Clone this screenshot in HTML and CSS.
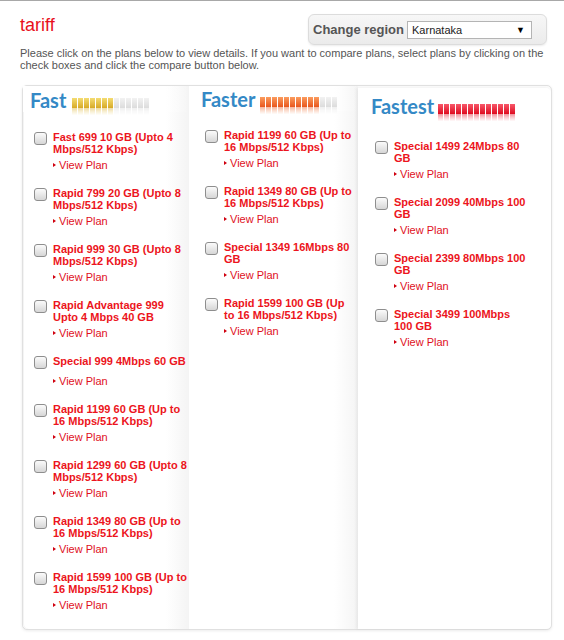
FILE: index.html
```html
<!DOCTYPE html>
<html>
<head>
<meta charset="utf-8">
<title>tariff</title>
<link rel="stylesheet" href="styles.css">
</head>
<body>
<div class="top">
  <h1 class="title">tariff</h1>
  <div class="region">
    <span class="region-label">Change region</span>
    <div class="select"><span class="select-value">Karnataka</span><span class="select-arrow">&#9660;</span></div>
  </div>
</div>
<p class="intro">Please click on the plans below to view details. If you want to compare plans, select plans by clicking on the check boxes and click the compare button below.</p>

<div class="plans">
  <div class="col col-fast">
    <div class="col-head">
      <span class="col-name">Fast</span>
      <span class="meter meter-fast"><i class="seg on"></i><i class="seg on"></i><i class="seg on"></i><i class="seg on"></i><i class="seg on"></i><i class="seg on"></i><i class="seg on"></i><i class="seg"></i><i class="seg"></i><i class="seg"></i><i class="seg"></i><i class="seg"></i><i class="seg"></i></span>
    </div>
    <ul class="list">
      <li class="plan"><input type="checkbox" class="check"><span class="plan-name">Fast 699 10 GB (Upto 4 Mbps/512 Kbps)</span><a class="view">View Plan</a></li>
      <li class="plan"><input type="checkbox" class="check"><span class="plan-name">Rapid 799 20 GB (Upto 8 Mbps/512 Kbps)</span><a class="view">View Plan</a></li>
      <li class="plan"><input type="checkbox" class="check"><span class="plan-name">Rapid 999 30 GB (Upto 8 Mbps/512 Kbps)</span><a class="view">View Plan</a></li>
      <li class="plan"><input type="checkbox" class="check"><span class="plan-name">Rapid Advantage 999 Upto 4 Mbps 40 GB</span><a class="view">View Plan</a></li>
      <li class="plan"><input type="checkbox" class="check"><span class="plan-name">Special 999 4Mbps 60 GB</span><a class="view">View Plan</a></li>
      <li class="plan"><input type="checkbox" class="check"><span class="plan-name">Rapid 1199 60 GB (Up to 16 Mbps/512 Kbps)</span><a class="view">View Plan</a></li>
      <li class="plan"><input type="checkbox" class="check"><span class="plan-name">Rapid 1299 60 GB (Upto 8 Mbps/512 Kbps)</span><a class="view">View Plan</a></li>
      <li class="plan"><input type="checkbox" class="check"><span class="plan-name">Rapid 1349 80 GB (Up to 16 Mbps/512 Kbps)</span><a class="view">View Plan</a></li>
      <li class="plan"><input type="checkbox" class="check"><span class="plan-name">Rapid 1599 100 GB (Up to 16 Mbps/512 Kbps)</span><a class="view">View Plan</a></li>
    </ul>
  </div>

  <div class="col col-faster">
    <div class="col-head">
      <span class="col-name">Faster</span>
      <span class="meter meter-faster"><i class="seg on"></i><i class="seg on"></i><i class="seg on"></i><i class="seg on"></i><i class="seg on"></i><i class="seg on"></i><i class="seg on"></i><i class="seg on"></i><i class="seg on"></i><i class="seg on"></i><i class="seg"></i><i class="seg"></i><i class="seg"></i></span>
    </div>
    <ul class="list">
      <li class="plan"><input type="checkbox" class="check"><span class="plan-name">Rapid 1199 60 GB (Up to 16 Mbps/512 Kbps)</span><a class="view">View Plan</a></li>
      <li class="plan"><input type="checkbox" class="check"><span class="plan-name">Rapid 1349 80 GB (Up to 16 Mbps/512 Kbps)</span><a class="view">View Plan</a></li>
      <li class="plan"><input type="checkbox" class="check"><span class="plan-name">Special 1349 16Mbps 80 GB</span><a class="view">View Plan</a></li>
      <li class="plan"><input type="checkbox" class="check"><span class="plan-name">Rapid 1599 100 GB (Up to 16 Mbps/512 Kbps)</span><a class="view">View Plan</a></li>
    </ul>
  </div>

  <div class="col col-fastest">
    <div class="col-head">
      <span class="col-name">Fastest</span>
      <span class="meter meter-fastest"><i class="seg on"></i><i class="seg on"></i><i class="seg on"></i><i class="seg on"></i><i class="seg on"></i><i class="seg on"></i><i class="seg on"></i><i class="seg on"></i><i class="seg on"></i><i class="seg on"></i><i class="seg on"></i><i class="seg on"></i><i class="seg on"></i></span>
    </div>
    <ul class="list">
      <li class="plan"><input type="checkbox" class="check"><span class="plan-name">Special 1499 24Mbps 80 GB</span><a class="view">View Plan</a></li>
      <li class="plan"><input type="checkbox" class="check"><span class="plan-name">Special 2099 40Mbps 100 GB</span><a class="view">View Plan</a></li>
      <li class="plan"><input type="checkbox" class="check"><span class="plan-name">Special 2399 80Mbps 100 GB</span><a class="view">View Plan</a></li>
      <li class="plan"><input type="checkbox" class="check"><span class="plan-name">Special 3499 100Mbps 100 GB</span><a class="view">View Plan</a></li>
    </ul>
  </div>
</div>
</body>
</html>
```

FILE: styles.css
```css
html, body {
  margin: 0;
  padding: 0;
  background: #fff;
}
body {
  border-top: 1px solid #a8a8a8;
  font-family: "Liberation Sans", Arial, sans-serif;
  color: #555;
}

.top {
  display: flex;
  justify-content: space-between;
  align-items: flex-start;
  margin-top: 13px;
  padding: 0 17px 0 20px;
}
.title {
  margin: 1px 0 0;
  font-size: 18px;
  line-height: 20px;
  font-weight: normal;
  color: #e8101c;
}
.region {
  box-sizing: border-box;
  width: 239px;
  height: 31px;
  display: flex;
  align-items: center;
  gap: 3px;
  padding: 0 14px 0 4px;
  border: 1px solid #dcdcdc;
  border-radius: 6px;
  background: linear-gradient(#f7f7f7, #ebebeb);
  box-shadow: 0 1px 2px rgba(0,0,0,0.08);
}
.region-label {
  font-size: 13px;
  font-weight: bold;
  color: #555;
  white-space: nowrap;
}
.select {
  box-sizing: border-box;
  width: 125px;
  height: 18px;
  display: flex;
  align-items: center;
  justify-content: space-between;
  padding: 0 6px 0 4px;
  border: 1px solid #b4b4b4;
  background: #fff;
}
.select-value {
  font-size: 11px;
  color: #222;
}
.select-arrow {
  font-size: 9px;
  color: #000;
}

.intro {
  margin: 2px 0 0;
  padding: 0 20px;
  font-size: 11px;
  line-height: 12px;
  color: #555;
}

.plans {
  margin: 14px 12px 20px 22px;
  display: grid;
  grid-template-columns: 166px 169px 1fr;
  border: 1px solid #e0e0e0;
  border-radius: 5px;
  background: #fafafa;
  box-shadow: 0 1px 3px rgba(0,0,0,0.08);
}

.col {
  background: linear-gradient(to right, #fff 0, #fff 86%, #f4f4f4 100%);
}
.col-fast {
  border-radius: 5px 0 0 5px;
  box-shadow: inset 1px 0 0 #f4f4f4;
}
.col-fastest {
  margin-top: 2px;
  background: #fff;
  border-radius: 0 5px 5px 0;
  box-shadow: -2px 0 3px rgba(0,0,0,0.05);
}

.col-head {
  display: flex;
  align-items: flex-end;
  gap: 6px;
  background: linear-gradient(to right, #fff 75%, rgba(255,255,255,0));
}
.col-fast .col-head { padding: 2px 0 0 7px; }
.col-faster .col-head { padding: 1px 0 0 12px; gap: 5px; }
.col-fastest .col-head { padding: 6px 0 0 13px; gap: 4px; }

.col-name {
  font-family: Lato, "Open Sans", sans-serif;
  font-weight: bold;
  font-size: 20px;
  line-height: 24px;
  color: #3489c6;
}

.meter {
  display: flex;
  gap: 1px;
  margin-bottom: 4px;
  -webkit-box-reflect: below 0 linear-gradient(transparent 25%, rgba(255,255,255,0.45));
}
.seg {
  display: block;
  width: 5px;
  height: 10px;
  background: linear-gradient(#f2f2f2, #dcdcdc);
}
.meter-fast .on { background: linear-gradient(#f4dc72, #d7aa27); }
.meter-faster .on { background: linear-gradient(#fb9c5e, #e9561c); }
.meter-fastest .on { background: linear-gradient(#f8586a, #de0b20); }

.list {
  list-style: none;
  margin: 0;
  padding: 0 0 2px;
}
.col-fast .list { padding-top: 19px; padding-left: 11px; }
.col-faster .list { padding-top: 18px; padding-left: 16px; }
.col-fastest .list { padding-top: 22px; padding-left: 17px; }

.plan {
  display: grid;
  grid-template-columns: 13px auto;
  grid-template-rows: minmax(20px, auto) auto;
  column-gap: 6px;
  margin-bottom: 16px;
}
.col-fast .plan { grid-template-columns: 13px 136px; }
.col-faster .plan { grid-template-columns: 13px 131px; }
.col-fastest .plan { grid-template-columns: 13px 134px; }

.check {
  -webkit-appearance: none;
  appearance: none;
  box-sizing: border-box;
  width: 13px;
  height: 13px;
  margin: 1px 0 0;
  border: 1px solid #8e8e8e;
  border-radius: 3px;
  background: linear-gradient(#fbfbfb, #d6d6d6);
}
.plan-name {
  padding-bottom: 4px;
  font-size: 11px;
  line-height: 12px;
  font-weight: bold;
  color: #ec1420;
}
.view {
  grid-column: 2;
  display: flex;
  align-items: center;
  gap: 3px;
  font-size: 11px;
  line-height: 12px;
  color: #e0101c;
  cursor: pointer;
}
.view::before {
  content: "";
  width: 0;
  height: 0;
  border-left: 3px solid #d0000f;
  border-top: 2.5px solid transparent;
  border-bottom: 2.5px solid transparent;
}
```
